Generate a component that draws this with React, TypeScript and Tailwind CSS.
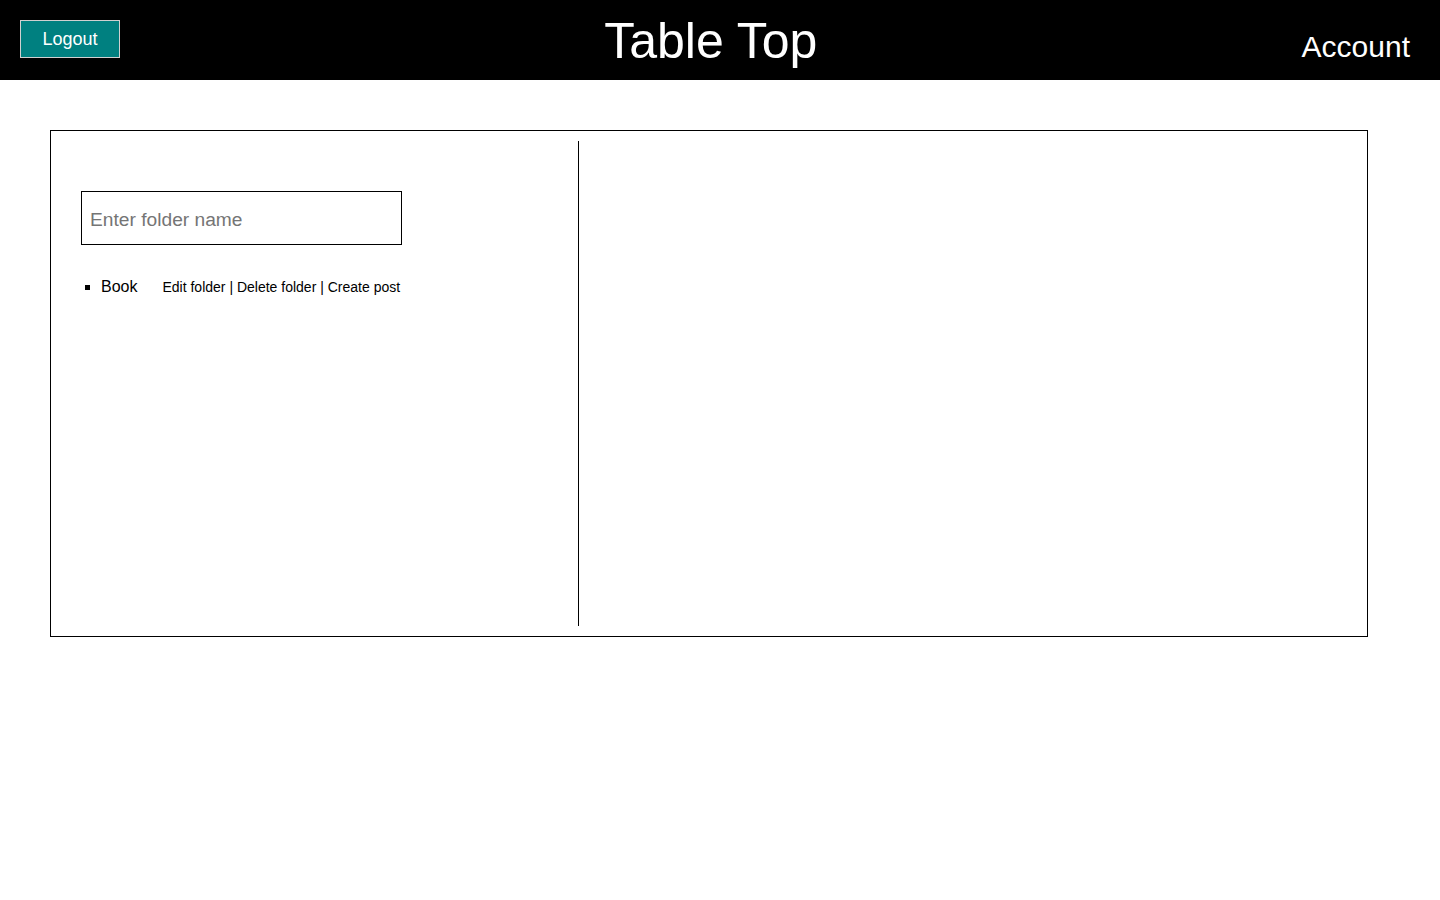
import React from "react";

// ── Página: Table Top ─────────────────────────────────────────────────────────

const folders = [{ id: "1", name: "Book" }];

export default function App() {
  return (
    <div className="min-h-screen bg-white font-['Liberation_Sans',Arial,sans-serif] text-black">
      {/* ── Header ─────────────────────────────────────────────────────────── */}
      <header className="h-20 bg-black flex justify-between items-start pl-5 pr-[30px]">
        <button className="mt-5 w-[100px] h-[38px] bg-[#008080] border border-[#d0d0d0] text-white text-[18px] leading-none">
          Logout
        </button>
        <h1 className="text-white text-[50px] leading-[80px] pt-[1px]">Table Top</h1>
        <a className="text-white text-[30px] leading-none mt-[32px]">Account</a>
      </header>

      {/* ── Contenido ──────────────────────────────────────────────────────── */}
      <main className="ml-[50px] mt-[50px] w-[1318px] h-[507px] border border-black p-[10px] flex">
        <section className="w-[518px] border-r border-black pl-5 pt-[50px]">
          <input
            type="text"
            placeholder="Enter folder name"
            className="w-[321px] h-[54px] border border-black px-2 pt-1 text-[19.2px] placeholder:text-[#757575] outline-none"
          />
          <ul className="list-[square] pl-5 mt-8">
            {folders.map((f) => (
              <li key={f.id} className="text-[16px] leading-[20px]">
                <span>{f.name}</span>
                <span className="ml-[25px] text-[14px]">
                  <a>Edit folder</a> | <a>Delete folder</a> | <a>Create post</a>
                </span>
              </li>
            ))}
          </ul>
        </section>
        <section className="flex-1" />
      </main>
    </div>
  );
}
